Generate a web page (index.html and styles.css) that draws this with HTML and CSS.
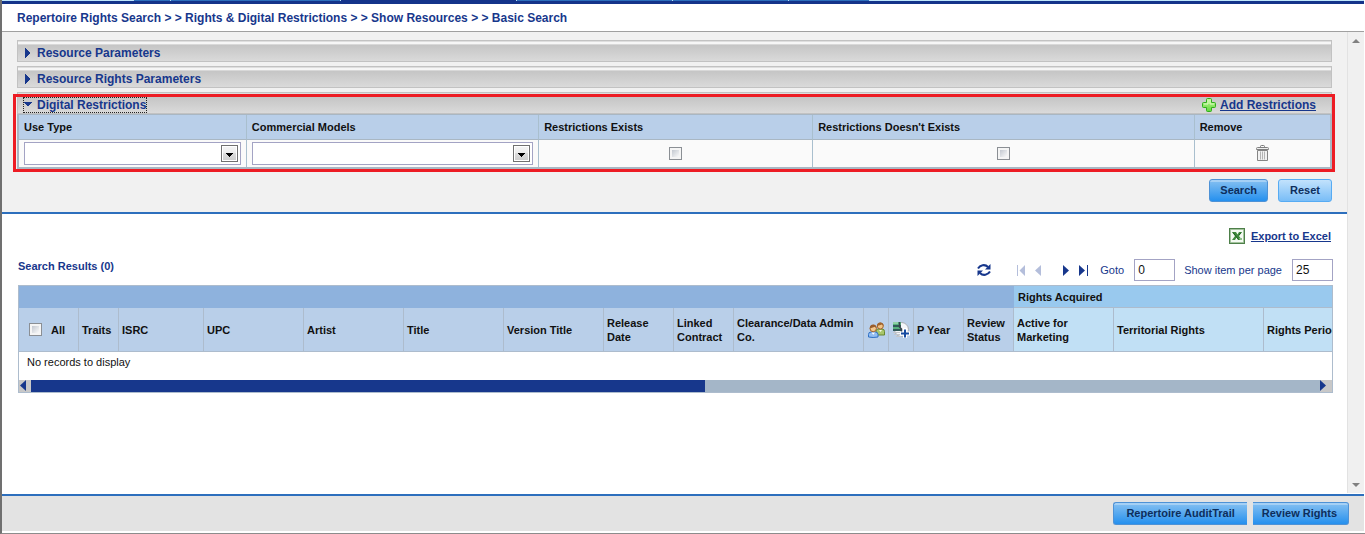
FILE: index.html
```html
<!DOCTYPE html>
<html lang="en">
<head>
<meta charset="utf-8">
<title>Basic Search</title>
<link rel="stylesheet" href="styles.css">
</head>
<body>
<svg class="defs" aria-hidden="true">
  <defs>
    <linearGradient id="plus-fill" x1="0" y1="0" x2="0" y2="1"><stop offset="0" stop-color="#c4f59a"/><stop offset="1" stop-color="#5fd83a"/></linearGradient>
    <linearGradient id="drop-fill" x1="0" y1="0" x2="0" y2="1"><stop offset="0" stop-color="#f4f4f4"/><stop offset=".5" stop-color="#ebebeb"/><stop offset=".5" stop-color="#dcdcdc"/><stop offset="1" stop-color="#cfcfcf"/></linearGradient>
    <symbol id="drop" viewBox="0 0 17 17">
      <rect x=".5" y=".5" width="16" height="16" fill="#fff" stroke="#707070"/>
      <rect x="2" y="2" width="13" height="13" fill="url(#drop-fill)"/>
      <path d="M5 8h7v1h-1v1h-1v1H9v1H8v-1H7v-1H6V9H5z" fill="#000"/>
    </symbol>
  </defs>
</svg>
<div class="app">
  <nav class="tabs" aria-label="Sections">
    <span class="tab tab-lead"></span><span class="tab tab-a"></span><span class="tab tab-b"></span><span class="tab tab-active"></span><span class="tab tab-c"></span><span class="tab tab-d"></span><span class="tab tab-e"></span><span class="tab tab-rest"></span>
  </nav>
  <header class="crumbs">Repertoire Rights Search &gt; &gt; Rights &amp; Digital Restrictions &gt; &gt; Show Resources &gt; &gt; Basic Search</header>

  <div class="middle">
    <main class="content">
      <section class="filters">
        <div class="panel">
          <button class="panel-title" type="button"><svg class="arrow" viewBox="0 0 8 10"><path d="M1 0h1v1h1v1h1v1h1v1h1v2H5v1H4v1H3v1H2v1H1z"/></svg>Resource Parameters</button>
        </div>
        <div class="panel">
          <button class="panel-title" type="button"><svg class="arrow" viewBox="0 0 8 10"><path d="M1 0h1v1h1v1h1v1h1v1h1v2H5v1H4v1H3v1H2v1H1z"/></svg>Resource Rights Parameters</button>
        </div>
        <div class="marked">
          <div class="panel">
            <button class="panel-title focused" type="button"><svg class="arrow" viewBox="0 0 8 10"><path d="M0 2h8v1H7v1H6v1H5v1H3V5H2V4H1V3H0z"/></svg>Digital Restrictions</button>
            <a class="add" href="#"><svg class="plus" viewBox="0 0 14 14"><path d="M5.500.5h3q1 0 1 1v3h3q1 0 1 1v3q0 1-1 1h-3v3q0 1-1 1h-3q-1 0-1-1v-3h-3q-1 0-1-1v-3q0-1 1-1h3v-3q0-1 1-1z" fill="url(#plus-fill)" stroke="#2fae1c"/><path d="M6 2v4H2M8 2v4h4" fill="none" stroke="#d9fbc0"/></svg><span>Add Restrictions</span></a>
          </div>
          <table class="restrictions">
            <colgroup><col class="r-use"><col class="r-model"><col class="r-exists"><col class="r-not"><col></colgroup>
            <thead><tr><th>Use Type</th><th>Commercial Models</th><th>Restrictions Exists</th><th>Restrictions Doesn't Exists</th><th>Remove</th></tr></thead>
            <tbody><tr>
              <td><span class="combo"><select aria-label="Use Type"><option></option></select><svg><use href="#drop"/></svg></span></td>
              <td><span class="combo"><select aria-label="Commercial Models"><option></option></select><svg><use href="#drop"/></svg></span></td>
              <td class="mid"><input type="checkbox" aria-label="Restrictions Exists"></td>
              <td class="mid"><input type="checkbox" aria-label="Restrictions Doesn't Exists"></td>
              <td class="mid"><button class="icon-button" type="button" aria-label="Remove"><svg class="trash" viewBox="0 0 13 16"><path d="M4.500 2.500v-1q0-1 1-1h2q1 0 1 1v1" fill="none" stroke="#777"/><path d="M.5 4.500v-1q0-1 1-1h10q1 0 1 1v1z" fill="#eee" stroke="#808080"/><path d="M1.500 5.500h10v10h-10z" fill="#f2f2f2" stroke="#858585"/><path d="M4.500 6.500v8M6.500 6.500v8M8.500 6.500v8" stroke="#b4b4b4"/></svg></button></td>
            </tr></tbody>
          </table>
        </div>
        <div class="actions"><button class="btn" type="button">Search</button><button class="btn pale" type="button">Reset</button></div>
      </section>

      <section class="results">
        <a class="export" href="#"><svg class="excel" viewBox="0 0 16 16"><path d="M0 0h16v16H0z" fill="#4d7f49"/><path d="M1.500 1.500h13v13h-13z" fill="#f4faf2" stroke="#a4c49e"/><path d="M3 4h4l1.500 2.500L10 4h3l-3 4 3 4H9L7.500 9.500 6 12H3l3-4z" fill="#3f8a3b"/><path d="M4 4.500l5.500 7M12 4.500l-2 2.700" stroke="#1d5e20" fill="none"/><path d="M10 10h3v2h-2z" fill="#8fbf8a"/></svg><span>Export to Excel</span></a>
        <div class="toolbar">
          <h2>Search Results (0)</h2>
          <div class="pager">
            <button class="icon-button refresh" type="button" aria-label="Refresh"><svg width="14" height="14" viewBox="0 0 14 14" fill="none" stroke="#17378c" stroke-width="2"><path d="M1 5.500C3 2 8 .8 11 4"/><path d="M13.500 1v5.500H8z" fill="#17378c" stroke="none"/><path d="M13 8.500C11 12 6 13.200 3 10"/><path d="M.5 13V7.500H6z" fill="#17378c" stroke="none"/></svg></button>
            <button class="icon-button first" type="button" aria-label="First page" disabled><svg width="8" height="11" viewBox="0 0 8 11"><path d="M0 0h1v11H0zM8 0v11L2.500 5.500z" fill="#b4bedb"/></svg></button>
            <button class="icon-button prev" type="button" aria-label="Previous page" disabled><svg width="6" height="11" viewBox="0 0 6 11"><path d="M6 0v11L0 5.500z" fill="#b4bedb"/></svg></button>
            <button class="icon-button next" type="button" aria-label="Next page"><svg width="6" height="11" viewBox="0 0 6 11"><path d="M0 0v11l6-5.500z" fill="#17378c"/></svg></button>
            <button class="icon-button last" type="button" aria-label="Last page"><svg width="9" height="11" viewBox="0 0 9 11"><path d="M0 0v11l6-5.500zM8 0h1v11H8z" fill="#17378c"/></svg></button>
            <label for="goto">Goto</label><input class="num" id="goto" type="text" value="0">
            <label for="size">Show item per page</label><input class="num" id="size" type="text" value="25">
          </div>
        </div>
        <div class="grid">
          <table>
            <colgroup><col class="w60"><col class="w40"><col class="w85"><col class="w100"><col class="w100"><col class="w100"><col class="w100"><col class="w70"><col class="w60"><col class="w130"><col class="w25"><col class="w25"><col class="w50"><col class="w50"><col class="w100"><col class="w150"><col class="w150"></colgroup>
            <thead>
              <tr class="groups"><th colspan="14" class="plain"></th><th colspan="3" class="acquired">Rights Acquired</th></tr>
              <tr class="heads">
                <th><label class="all"><input type="checkbox">All</label></th><th class="tight">Traits</th><th>ISRC</th><th>UPC</th><th>Artist</th><th>Title</th><th>Version Title</th><th>Release Date</th><th>Linked Contract</th><th class="tight">Clearance/Data Admin Co.</th>
                <th class="pic"><svg width="17" height="16" viewBox="0 0 17 16"><path d="M8 13V9q0-2 2-2h4q2.500 0 2.500 2.500V13z" fill="#a9c66b" stroke="#66872f"/><path d="M11 8l1.500 2L14 8z" fill="#f4f8e8"/><circle cx="12.300" cy="4" r="3" fill="#f1c487" stroke="#a3642c"/><path d="M9 4Q9 .4 12.300.4T15.600 4L14 2.500z" fill="#a0642e"/><path d="M.5 15v-2.500Q.5 10 3 10h4.500q2.500 0 2.500 2.500V15q-5 1-9.500 0z" fill="#93bdf1" stroke="#2f70c4"/><path d="M3.500 10.500l1.800 2.200L7 10.500z" fill="#fff"/><circle cx="5.200" cy="6.500" r="3.200" fill="#f3c88e" stroke="#a3642c"/><path d="M1.800 6.500Q1.800 2.500 5.200 2.500T8.600 6.500L7 4.700z" fill="#9a5d2b"/></svg></th>
                <th class="pic"><svg width="17" height="16" viewBox="0 0 17 16"><circle cx="8.500" cy="7.500" r="7" fill="#f4f6fa" stroke="#a9adb3"/><path d="M0 0h8v9H0z" fill="#56b07c"/><path d="M0 0h5v2H0z" fill="#8fd0a6"/><path d="M0 4h8M0 8h8" stroke="#263d4c" stroke-width="1.500"/><path d="M6.500 0v5l2 2v5" fill="none" stroke="#39434e" stroke-width="1.500"/><path d="M0 10.500h7M1 12.500h6M3 14.500h5" stroke="#c4c7cc"/><path d="M12 6v10M7 11.500h10" stroke="#fff" stroke-width="4"/><path d="M12 7.500v8M8 11.500h8" stroke="#174ba0" stroke-width="2"/></svg></th>
                <th>P Year</th><th>Review Status</th><th class="sub">Active for Marketing</th><th class="sub">Territorial Rights</th><th class="sub">Rights Period</th>
              </tr>
            </thead>
            <tbody><tr><td colspan="17">No records to display</td></tr></tbody>
          </table>
          <div class="hscroll"><button class="icon-button" type="button" aria-label="Scroll left"><svg width="6" height="11" viewBox="0 0 6 11"><path d="M6 0v11L0 5.500z" fill="#17378c"/></svg></button><div class="track"><div class="thumb"></div></div><button class="icon-button" type="button" aria-label="Scroll right"><svg width="6" height="11" viewBox="0 0 6 11"><path d="M0 0v11l6-5.500z" fill="#17378c"/></svg></button></div>
        </div>
      </section>
    </main>
    <div class="vscroll"><svg width="8" height="4" viewBox="0 0 8 4"><path d="M4 0l4 4H0z" fill="#808080"/></svg><svg width="8" height="4" viewBox="0 0 8 4"><path d="M0 0h8L4 4z" fill="#808080"/></svg></div>
  </div>

  <footer class="foot"><button class="btn cut-right" type="button">Repertoire AuditTrail</button><button class="btn cut-left" type="button">Review Rights</button></footer>
</div>
</body>
</html>
```

FILE: styles.css
```css
* { box-sizing: border-box; }

body {
  margin: 0;
  background: #fff;
  color: #111;
  font: 11px/14px "Liberation Sans", Arial, sans-serif;
}

button, input, select { font: inherit; color: inherit; }
a { color: #17378c; }
.defs { position: absolute; width: 0; height: 0; }

.app {
  display: flex;
  flex-direction: column;
  min-height: 100vh;
  padding: 0 1px 2px 0;
  border-left: 2px solid #707070;
  border-bottom: 1px solid #8c8c8c;
  overflow: hidden;
}

.tabs { display: flex; height: 4px; border-bottom: 3px solid #14348a; }
.tab { background: #2d6fbd; border-right: 1px solid #b8dcf5; }
.tab-lead, .tab-rest { background: #bfe6fb; }
.tab-lead { width: 132px; }
.tab-a { width: 37px; }
.tab-b { width: 170px; }
.tab-active { width: 176px; background: #14348a; }
.tab-c { width: 156px; }
.tab-d { width: 116px; }
.tab-e { width: 81px; }
.tab-rest { flex: 1; }

.crumbs {
  padding: 6px 15px 5px;
  border-bottom: 1px solid #a0a0a0;
  color: #17378c;
  font-size: 12px;
  font-weight: bold;
  line-height: 16px;
}

.middle { display: flex; flex: 1; }
.content { flex: 1; min-width: 0; }

.vscroll {
  display: flex;
  flex-direction: column;
  justify-content: space-between;
  align-items: center;
  width: 17px;
  margin: 0 0 1px;
  padding: 7px 0 6px;
  background: #f0f0f0;
  border-left: 1px solid #e2e2e2;
}

.filters {
  padding: 8px 15px 10px;
  background: #f1f1f1;
  border-bottom: 2px solid #2d6fbd;
}

.panel {
  display: flex;
  justify-content: space-between;
  align-items: flex-end;
  height: 22px;
  margin-bottom: 4px;
  padding: 0 15px 0 5px;
  border: 1px solid #c2c2c2;
  background: linear-gradient(#dedede 1px, #f6f6f6 1px 3px, #d8d8d8 3px 4px, #c5c5c5 4px, #dadada);
}

.panel-title {
  display: flex;
  align-items: center;
  gap: 5px;
  height: 16px;
  padding: 0;
  border: 1px solid transparent;
  background: none;
  color: #17378c;
  font-size: 12px;
  font-weight: bold;
  line-height: 14px;
}
.panel-title.focused { border: 1px dotted #222; }
.arrow { width: 8px; height: 10px; fill: #17378c; }

.marked { position: relative; }
.marked::after {
  content: "";
  position: absolute;
  inset: 2px -3px -3px -4px;
  border: 3px solid #ed1c24;
  pointer-events: none;
}
.marked .panel { margin-bottom: 0; }

.add, .export { display: flex; align-items: center; font-weight: bold; }
.add { gap: 4px; font-size: 12px; line-height: 16px; }
.plus { width: 14px; height: 14px; }

table { border-collapse: separate; border-spacing: 0; table-layout: fixed; }
th, td { padding: 0; text-align: left; }

.restrictions {
  width: 100%;
  border: 1px solid #a9b7c3;
  border-width: 1px 2px 2px;
}
.restrictions th { height: 25px; padding: 0 5px; background: #b9cfe9; border-bottom: 1px solid #a9b7c3; }
.restrictions td { height: 27px; padding: 0 5px; background: #fafafa; }
.restrictions th + th, .restrictions td + td { border-left: 1px solid #a9bfce; }
.r-use { width: 17.3%; }
.r-model { width: 22.3%; }
.r-exists { width: 20.9%; }
.r-not { width: 29.1%; }
.restrictions .mid { padding-bottom: 1px; text-align: center; }

.combo { position: relative; display: block; }
.combo select {
  display: block;
  width: 100%;
  height: 23px;
  border: 1px solid #a3a3c4;
  border-radius: 0;
  background: #fff;
  appearance: none;
}
.combo svg { position: absolute; top: 3px; right: 3px; width: 17px; height: 17px; pointer-events: none; }

input[type="checkbox"] {
  width: 13px;
  height: 13px;
  margin: 0;
  border: 1px solid #8b8f94;
  background: linear-gradient(135deg, #c3c8d0, #fafafa) content-box, #f5f5f5;
  padding: 2px;
  appearance: none;
  vertical-align: middle;
}

.icon-button { display: inline-flex; padding: 0; border: 0; background: none; vertical-align: middle; }
.icon-button svg { display: block; }
.trash { width: 13px; height: 16px; }

.actions { display: flex; justify-content: flex-end; gap: 10px; padding-top: 10px; }

.btn {
  height: 23px;
  padding: 0 10px 1px;
  border: 1px solid #4e92d6;
  border-radius: 3px;
  background: linear-gradient(#a5d0f5 2px, #7dbcf1 2px, #2590ee);
  color: #0d2e5c;
  font-weight: bold;
}
.actions .btn { min-width: 54px; }
.pale { border-color: #56abf3; background: linear-gradient(#c2e2fc, #79bdf7); }

.results { padding: 14px 14px 0 16px; }
.export { justify-content: flex-end; gap: 6px; padding-right: 2px; font-size: 11px; line-height: 16px; }
.export span { padding-bottom: 1px; line-height: 14px; }
.excel { width: 16px; height: 16px; }

.toolbar { display: flex; justify-content: space-between; padding-top: 15px; }
.toolbar h2 { margin: 0; color: #17378c; font-size: 11px; line-height: 14px; }
.pager { display: flex; align-items: center; color: #17378c; }
.refresh { margin-right: 26px; }
.first { margin-right: 10px; }
.prev { margin-right: 22px; }
.next { margin-right: 10px; }
.last { margin-right: 12px; }
.num {
  width: 41px;
  height: 22px;
  margin: 0 0 0 10px;
  padding: 0 3px;
  border: 1px solid #a3a3c4;
  color: #111;
  font-size: 12px;
}
.num + label { margin-left: 9px; }

.grid { margin-top: 4px; border: 1px solid #adbccd; overflow: hidden; }
.grid table { width: 1395px; }
.w25 { width: 25px; }
.w40 { width: 40px; }
.w50 { width: 50px; }
.w60 { width: 60px; }
.w70 { width: 70px; }
.w85 { width: 85px; }
.w100 { width: 100px; }
.w130 { width: 130px; }
.w150 { width: 150px; }
.groups th { height: 22px; background: #8eb2dd; }
.groups .acquired { padding: 0 4px; background: #99c9ee; border-bottom: 1px solid #adbccd; }
.heads th {
  height: 44px;
  padding: 0 4px 0 3px;
  background: #b9cfe9;
  border-right: 1px solid #adbccd;
  border-bottom: 1px solid #adbccd;
}
.heads .tight { padding-right: 0; }
.heads .sub { background: #c1e0f5; }
.heads .pic { padding: 0; text-align: center; }
.pic svg { display: block; margin: 0 auto; }
.all { display: flex; align-items: center; gap: 9px; padding-left: 7px; }
.grid td { height: 28px; padding: 3px 8px 11px; }

.hscroll { display: flex; height: 12px; background: #c8c8c8; }
.hscroll .icon-button { width: 12px; padding: 0 1px; }
.hscroll .icon-button:last-child { padding: 0; }
.track { flex: 1; background: #a4b6c8; }
.thumb { width: 52.3%; height: 12px; background: #17378c; }

.foot {
  display: flex;
  justify-content: flex-end;
  gap: 6px;
  padding: 6px 15px 6px;
  border-top: 2px solid #2d6fbd;
  background: #e3e3e3;
}
.foot .btn { padding: 0 12px 1px; }
.foot .cut-right { border-right: 0; border-radius: 3px 0 0 3px; }
.foot .cut-left { border-left: 0; padding: 0 11px 1px 9px; border-radius: 0 3px 3px 0; }
```
